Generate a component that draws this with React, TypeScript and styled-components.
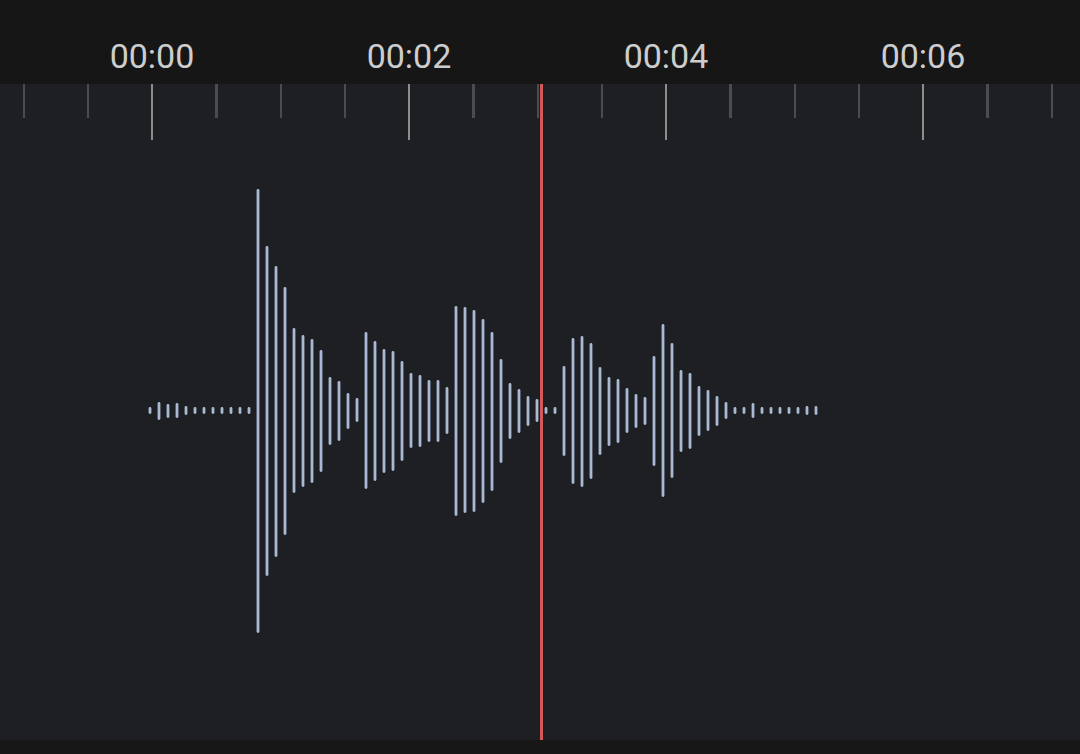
import styled, { createGlobalStyle } from 'styled-components'

const GlobalStyle = createGlobalStyle`
  html,
  body {
    margin: 0;
    padding: 0;
    background: #161616;
  }

  body {
    font-family: Roboto, 'Noto Sans', sans-serif;
  }
`

// one label every 2 s, one minor tick every 0.5 s
const SECOND_PX = 128.5
const TICK_PX = SECOND_PX / 2
const FIRST_TICK = 23.5
const WAVE_TOP = 140

const labels = ['00:00', '00:02', '00:04', '00:06']

// [top, bottom] of each bar in page pixels, bars 9px apart from x = 150
const bars: [number, number][] = [
  [407, 414], [402, 420], [404, 418], [403, 418], [406, 415],
  [407, 414], [407, 414], [407, 414], [407, 414], [407, 414],
  [407, 414], [407, 414], [189, 633], [246, 576], [266, 557],
  [287, 535], [328, 493], [335, 487], [339, 483], [350, 472],
  [377, 445], [381, 441], [393, 429], [398, 422], [332, 489],
  [341, 481], [349, 473], [351, 471], [361, 461], [373, 448],
  [375, 447], [380, 442], [380, 442], [387, 434], [306, 516],
  [307, 513], [310, 512], [319, 503], [332, 491], [359, 463],
  [383, 439], [389, 433], [396, 426], [399, 422], [407, 414],
  [407, 414], [366, 456], [338, 484], [336, 487], [343, 479],
  [367, 455], [377, 446], [379, 443], [388, 433], [394, 428],
  [397, 425], [356, 466], [324, 497], [343, 478], [370, 452],
  [373, 449], [386, 436], [390, 431], [396, 426], [402, 419],
  [407, 414], [407, 414], [403, 418], [407, 414], [407, 414],
  [407, 414], [407, 414], [407, 414], [406, 415], [406, 415],
]

const Screen = styled.div`
  display: flex;
  flex-direction: column;
  width: 1080px;
  height: 754px;
  overflow: hidden;
  background: #161616;
`

const TimeBar = styled.div`
  display: flex;
  align-items: flex-start;
  height: 84px;
  padding-top: 39px;
  padding-left: ${FIRST_TICK}px;
  box-sizing: border-box;
  flex-shrink: 0;
`

const TimeLabel = styled.span`
  width: ${SECOND_PX * 2}px;
  flex-shrink: 0;
  text-align: center;
  color: #cdcdcd;
  font-size: 34px;
  line-height: 1;
`

const Track = styled.div`
  position: relative;
  display: flex;
  flex-direction: column;
  height: 656px;
  flex-shrink: 0;
  background: #1e1f22;
`

const Ruler = styled.div`
  display: flex;
  height: ${WAVE_TOP - 84}px;
  padding-left: ${FIRST_TICK - 1}px;
`

const TickSlot = styled.div`
  width: ${TICK_PX}px;
  flex-shrink: 0;
`

const Tick = styled.div<{ $major: boolean }>`
  width: 2.4px;
  height: ${(p) => (p.$major ? 56 : 34)}px;
  background: ${(p) => (p.$major ? '#8d8d8d' : '#4a4c4f')};
`

const Wave = styled.svg`
  display: block;
  width: 1080px;
  height: ${754 - 14 - WAVE_TOP}px;
`

const Playhead = styled.div`
  position: absolute;
  top: 0;
  bottom: 0;
  left: 539.5px;
  width: 3px;
  background: #d45858;
`

const BottomStrip = styled.div`
  flex: 1;
  background: #171717;
`

const App = () => {
  const ticks = Array.from({ length: 17 }, (_, i) => i)

  return (
    <>
      <GlobalStyle />
      <Screen>
        <TimeBar>
          {labels.map((l) => (
            <TimeLabel key={l}>{l}</TimeLabel>
          ))}
        </TimeBar>
        <Track>
          <Ruler>
            {ticks.map((i) => (
              <TickSlot key={i}>
                <Tick $major={i % 4 === 2} />
              </TickSlot>
            ))}
          </Ruler>
          <Wave viewBox={`0 0 1080 ${754 - 14 - WAVE_TOP}`}>
            {bars.map(([top, bottom], i) => (
              <rect
                key={i}
                x={150 + i * 9 - 1.4}
                y={top - WAVE_TOP}
                width={2.8}
                height={bottom - top}
                rx={1.4}
                fill="#a9b9d4"
              />
            ))}
          </Wave>
          <Playhead />
        </Track>
        <BottomStrip />
      </Screen>
    </>
  )
}

export default App
